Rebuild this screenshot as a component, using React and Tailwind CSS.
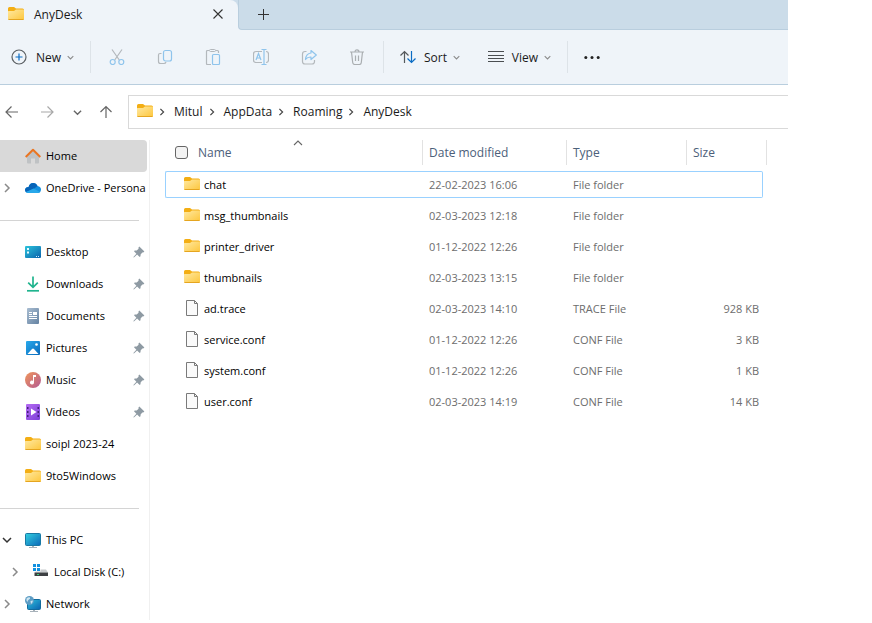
import { useId } from "react";

function Folder() {
  const id = useId();
  return (
    <svg className="block shrink-0" width="16" height="16" viewBox="0 0 16 16" aria-hidden="true">
      <defs>
        <linearGradient id={id} x1="0" y1="0" x2="1" y2="1">
          <stop offset="0" stopColor="#ffe9a2" />
          <stop offset="1" stopColor="#fdc63c" />
        </linearGradient>
      </defs>
      <path d="M0 2.500Q0 1 1.500 1H6l2 1.500h6.500Q16 2.500 16 4V8H0Z" fill="#f3ae14" />
      <path d="M0 5.500Q0 5 .5 5H6L8 3.500h7q1 0 1 1v8.500q0 1-1 1H1q-1 0-1-1Z" fill={`url(#${id})`} />
      <path d="M.5 13.500h15" stroke="#e5a520" />
    </svg>
  );
}

function FileIcon() {
  return (
    <svg className="block shrink-0" width="16" height="16" viewBox="0 0 16 16" aria-hidden="true">
      <path d="M2.500.5h8l3 3v12h-11Z" fill="#fafafa" stroke="#7a7a7a" />
      <path d="M10.500.5v3h3" fill="none" stroke="#7a7a7a" />
    </svg>
  );
}

const chevronPaths = {
  right: "M3 1l4 4-4 4",
  down: "M1 3l4 4 4-4",
  up: "M1 7l4-4 4 4",
};

function Chevron({ dir = "right", size = 10, color = "#8a8a8a", weight = 1.5 }) {
  return (
    <svg className="block shrink-0" width={size} height={size} viewBox="0 0 10 10" fill="none" stroke={color} strokeWidth={weight} aria-hidden="true">
      <path d={chevronPaths[dir]} />
    </svg>
  );
}

function Pin() {
  return (
    <svg className="block shrink-0" width="12" height="12" viewBox="0 0 12 12" fill="#8e9aa3" aria-hidden="true">
      <path d="M6.300.6 11.400 5.600 10.200 6.500 9.300 6.400 7.600 8.400 7.500 10.300 6.700 11 4.100 8.500 1.200 11.300.4 11.500.6 10.700 3.400 7.800 1 5.300 1.700 4.500 3.700 4.500 5.600 2.800 5.400 1.700Z" />
    </svg>
  );
}

function Icon16({ children, ...rest }) {
  return (
    <svg className="block shrink-0" width="16" height="16" viewBox="0 0 16 16" fill="none" aria-hidden="true" {...rest}>
      {children}
    </svg>
  );
}

const GREY = "#b3b8bc";
const BLUE = "#8fc4ec";

const toolIcons = {
  Cut: (
    <>
      <path d="M3 .5 10.300 11M13 .5 5.700 11" stroke={GREY} strokeWidth="1.200" />
      <circle cx="3.700" cy="13" r="2.500" fill="#eff4f9" stroke={BLUE} strokeWidth="1.200" />
      <circle cx="12.300" cy="13" r="2.500" fill="#eff4f9" stroke={BLUE} strokeWidth="1.200" />
    </>
  ),
  Copy: (
    <>
      <path d="M4.500 4.500H3Q1.500 4.500 1.500 6v6.500q0 2 2 2H7q1.500 0 2-1.500" stroke={GREY} strokeWidth="1.200" />
      <rect x="6.500" y="1.500" width="8" height="10.500" rx="2" stroke={BLUE} strokeWidth="1.200" />
    </>
  ),
  Paste: (
    <>
      <path d="M6 15.500H2.500q-1 0-1-1v-12q0-1 1-1H4m7 0h1.500q1 0 1 1V4" stroke={GREY} strokeWidth="1.200" />
      <rect x="4.500" y=".5" width="6" height="2" rx="1" stroke={GREY} />
      <rect x="7.500" y="5.500" width="7" height="10" rx="1" stroke={BLUE} strokeWidth="1.200" />
    </>
  ),
  Rename: (
    <>
      <path d="M9 13.500H3q-2.500 0-2.500-2.500V5Q.5 2.500 3 2.500h6M13 2.500q2.500 0 2.500 2.500v6q0 2.500-2.500 2.500" stroke={GREY} strokeWidth="1.200" />
      <path d="M3 11 5.500 4.500 8 11M4 9h3M8.500.5h5M11 .5v15M8.500 15.500h5" stroke={BLUE} strokeWidth="1.200" />
    </>
  ),
  Share: (
    <>
      <path d="M5.500 2.500H4Q1.500 2.500 1.500 5v7.500q0 2.500 2.500 2.500h7q2.500 0 2.500-2.500V11" stroke={GREY} strokeWidth="1.200" />
      <path d="M10 1.500 15.300 6 10 10.500V8Q6.500 7.800 4.500 10.500 5 4.500 10 4Z" stroke={BLUE} strokeWidth="1.200" strokeLinejoin="round" />
    </>
  ),
  Delete: (
    <path d="M1 3h14M6 3Q6 .8 8 .8T10 3M2.500 3l1.200 10.500q.2 2 2 2h4.600q1.800 0 2-2L13.500 3M6.500 6.500V12M9.500 6.500V12" stroke="#aaaeb1" strokeWidth="1.200" />
  ),
};

function HomeIcon() {
  return (
    <Icon16>
      <path d="M2 7 8 2l6 5v7.500q0 1-1 1h-3V10.500H6v5H3q-1 0-1-1Z" fill="#bfc2c4" />
      <path d="M.7 9 8 1.800 15.300 9" stroke="#ea7521" strokeWidth="2" strokeLinejoin="round" />
    </Icon16>
  );
}

function OneDriveIcon() {
  return (
    <Icon16>
      <path d="M3.600 7Q4.600 3 8.200 3q3 0 4.300 3Q16 6.600 16 9.500 15.800 13 12.500 13h-9Q0 12.900 0 9.900 0 7.500 3.600 7Z" fill="#1490df" />
      <path d="M3.600 7Q4.600 3 8.200 3q3 0 4.300 3L8 9.500 1 12Q-.4 10.500.2 8.900.9 7.200 3.600 7Z" fill="#0864b8" />
      <path d="M1 12 8.500 8.500l6.500 3.400Q14 13 12.500 13h-9Q2 13 1 12Z" fill="#28a8ea" />
    </Icon16>
  );
}

function Shade({ id, from, to }) {
  return (
    <defs>
      <linearGradient id={id} x1="0" y1="0" x2="1" y2="1">
        <stop offset="0" stopColor={from} />
        <stop offset="1" stopColor={to} />
      </linearGradient>
    </defs>
  );
}

function DesktopIcon() {
  return (
    <Icon16>
      <Shade id="desk" from="#2cc4dc" to="#0a62ac" />
      <rect y="2" width="16" height="12" rx="1" fill="url(#desk)" />
      <path d="M2 4h2v2H2ZM2 7.500h2v2H2Z" fill="#e5fbff" />
      <path d="M11 12.500h1m1 0h1" stroke="#cfeaff" />
    </Icon16>
  );
}

function DownloadsIcon() {
  return (
    <Icon16 strokeWidth="1.700">
      <path d="M8 0.500V11M3.200 6.700 8 11.300l4.800-4.600" stroke="#20b48e" />
      <path d="M2 14.800h12" stroke="#20b48e" />
    </Icon16>
  );
}

function DocumentsIcon() {
  return (
    <Icon16>
      <Shade id="docs" from="#a9bdd1" to="#6482a2" />
      <rect x="2" width="12" height="16" rx="1" fill="url(#docs)" />
      <path d="M4 4.500h3M4 6.500h3M4 8.500h8M4 10.500h8" stroke="#fff" />
      <path d="M8 4h4v3H8Z" fill="#fff" />
    </Icon16>
  );
}

function PicturesIcon() {
  return (
    <Icon16>
      <Shade id="pics" from="#28a9ec" to="#0969bb" />
      <rect x="1" y="1" width="14" height="14" rx="1" fill="url(#pics)" />
      <path d="M2.500 14 7 9q1-1 2 0l4.500 5Z" fill="#fff" />
      <circle cx="11.500" cy="4.500" r="1.300" fill="#fff" />
    </Icon16>
  );
}

function MusicIcon() {
  return (
    <Icon16>
      <Shade id="music" from="#f0965a" to="#b45a94" />
      <circle cx="8" cy="8" r="8" fill="url(#music)" />
      <path d="M8 3h3v2H9v5.500A2 2 0 1 1 8 8.800Z" fill="#fff" />
    </Icon16>
  );
}

function VideosIcon() {
  return (
    <Icon16>
      <Shade id="video" from="#b56cf2" to="#7d3ed8" />
      <rect x="1" width="14" height="16" rx="1" fill="url(#video)" />
      <path d="M6 4.500 11.500 8 6 11.500Z" fill="#fff" />
      <path d="M2 3h1.500v2H2ZM2 7h1.500v2H2ZM2 11h1.500v2H2ZM12.500 3H14v2h-1.500ZM12.500 7H14v2h-1.500ZM12.500 11H14v2h-1.500Z" fill="#43207a" />
    </Icon16>
  );
}

function PcIcon() {
  return (
    <Icon16>
      <Shade id="pc" from="#32d0e0" to="#0c68b8" />
      <path d="M7 13h2v2h3v1H4v-1h3Z" fill="#a8b2ba" />
      <rect x=".5" y="1.500" width="15" height="12" rx="1" fill="url(#pc)" stroke="#1878a4" />
    </Icon16>
  );
}

function DiskIcon() {
  return (
    <Icon16>
      <path d="M0 0h3v3H0ZM4 0h3v3H4ZM0 4h3v3H0ZM4 4h3v3H4Z" fill="#1090e0" />
      <path d="M1.500 8.500 3 7.500h4.500V5.500H13l2 3Z" fill="#c8cbce" />
      <path d="M1.500 8.500H15v3.500H1.500Z" fill="#3d4043" />
      <path d="M4 10.500h2" stroke="#3ad07a" />
    </Icon16>
  );
}

function NetworkIcon() {
  return (
    <Icon16>
      <Shade id="net" from="#30c2dc" to="#0a62b0" />
      <path d="M8 13h2v2h3v1H5v-1h3Z" fill="#a8b2ba" />
      <rect x="2.500" y="3.500" width="13" height="10" rx="1" fill="url(#net)" stroke="#126a9c" />
      <circle cx="4.500" cy="4.500" r="4.500" fill="#5c9cc4" />
      <path d="M1.500 2.500Q3.500.8 5 1.500q.5 1.500-1 2T2.500 6Q1 4.500 1.500 2.500ZM5.500 5 8 4.500Q7.500 7 6 8Z" fill="#cfe6f2" />
    </Icon16>
  );
}

function Tool({ name }) {
  return (
    <button type="button" disabled aria-label={name} className="flex h-8 w-8 items-center justify-center">
      <Icon16>{toolIcons[name]}</Icon16>
    </button>
  );
}

function Divider() {
  return <div className="h-8 w-px shrink-0 bg-[#dde3e8]" />;
}

function TabStrip() {
  return (
    <div className="flex h-[30px]">
      <div className="w-[238px] shrink-0 bg-[#cbdcea]">
        <div className="flex h-full items-center rounded-tr-lg bg-[#eff4f9] pr-[10px] pl-2">
          <div className="pb-0.5"><Folder /></div>
          <span className="ml-[10px] flex-1">AnyDesk</span>
          <button type="button" aria-label="Close tab" className="flex h-5 w-5 items-center justify-center pb-0.5">
            <svg width="10" height="10" viewBox="0 0 10 10" stroke="#333" strokeWidth="1.100"><path d="M.5.5l9 9m0-9l-9 9" /></svg>
          </button>
        </div>
      </div>
      <div className="flex-1 bg-[#eff4f9]">
        <div className="flex h-full items-center rounded-bl border-b border-l border-[#b9cede] bg-[#cbdce9] pl-4">
          <button type="button" aria-label="New tab" className="flex h-5 w-[17px] items-center justify-center">
            <svg width="11" height="11" viewBox="0 0 11 11" stroke="#333"><path d="M5.500 0v11M0 5.500h11" /></svg>
          </button>
        </div>
      </div>
    </div>
  );
}

function Toolbar() {
  return (
    <div className="flex h-[55px] items-center border-b border-[#b9cede] bg-[#eff4f9]">
      <div className="flex w-[90px] shrink-0 pl-[11px]">
        <button type="button" className="flex items-center">
          <Icon16>
            <circle cx="8" cy="8" r="7" stroke="#5a5f63" strokeWidth="1.200" />
            <path d="M8 4.500v7M4.500 8h7" stroke="#0a6cc4" strokeWidth="1.200" />
          </Icon16>
          <span className="mr-1.5 ml-[9px] pt-0.5">New</span>
          <Chevron dir="down" size={7} />
        </button>
      </div>
      <Divider />
      <div className="flex gap-4 px-[10px]">
        {Object.keys(toolIcons).map((name) => <Tool key={name} name={name} />)}
      </div>
      <Divider />
      <div className="flex w-[183px] shrink-0 justify-between pr-4 pl-4">
        <button type="button" className="flex items-center">
          <Icon16 strokeWidth="1.200">
            <path d="M4.500 14V2.500M.5 6.500l4-4 4 4" stroke="#55595c" />
            <path d="M11.500 2v11.500M7.500 9.500l4 4 4-4" stroke="#0a6cc4" />
          </Icon16>
          <span className="mr-1.5 ml-2 pt-0.5">Sort</span>
          <Chevron dir="down" size={7} />
        </button>
        <button type="button" className="flex items-center">
          <Icon16 stroke="#4a4e51">
            <path d="M0 2.500h16M0 6.500h16M0 9.500h16M0 12.500h16" />
          </Icon16>
          <span className="mr-1.5 ml-2 pt-0.5">View</span>
          <Chevron dir="down" size={7} />
        </button>
      </div>
      <Divider />
      <button type="button" aria-label="See more" className="ml-4">
        <Icon16 fill="#222"><circle cx="1.800" cy="8.500" r="1.500" /><circle cx="8" cy="8.500" r="1.500" /><circle cx="14.200" cy="8.500" r="1.500" /></Icon16>
      </button>
    </div>
  );
}

function AddressBar() {
  const crumbs = ["Mitul", "AppData", "Roaming", "AnyDesk"];
  return (
    <div className="flex items-center pt-[10px] pb-[11px]">
      <div className="flex w-32 shrink-0 items-center pl-1">
        <button type="button" aria-label="Back">
          <Icon16 stroke="#666" strokeWidth="1.200"><path d="M14 8H2M7.500 2.500 2 8l5.500 5.500" /></Icon16>
        </button>
        <button type="button" aria-label="Forward" className="ml-[19px]">
          <Icon16 stroke="#a8a8a8" strokeWidth="1.200"><path d="M2 8h12M8.500 2.500 14 8l-5.500 5.500" /></Icon16>
        </button>
        <button type="button" aria-label="Recent locations" className="ml-[18px]">
          <Chevron dir="down" size={9} color="#666" />
        </button>
        <button type="button" aria-label="Up" className="ml-4">
          <Icon16 stroke="#666" strokeWidth="1.200"><path d="M8 14V2.500M2.500 8 8 2.500 13.500 8" /></Icon16>
        </button>
      </div>
      <nav aria-label="Path" className="flex h-[34px] flex-1 items-center border-y border-l border-[#d9d9d9] pl-2">
        <div className="pb-0.5"><Folder /></div>
        {crumbs.map((c) => (
          <div key={c} className="flex items-center">
            <span className="mr-2 ml-[5px]"><Chevron size={8} color="#444" /></span>
            <a href="#">{c}</a>
          </div>
        ))}
      </nav>
    </div>
  );
}

function NavItem({ icon, label, expand, pinned, active, nested }) {
  return (
    <a
      href="#"
      className={`flex h-8 items-center whitespace-nowrap ${active ? "rounded-r-sm bg-[#d9d9d9]" : ""} ${nested ? "pl-[10px]" : "pl-[2px]"}`}
    >
      <span className="w-[23px] shrink-0">
        {expand && <Chevron dir={expand} color={expand === "down" ? "#333" : "#8a8a8a"} />}
      </span>
      {icon}
      <span className="ml-[5px] flex-1">{label}</span>
      {pinned && <span className="pr-0.5"><Pin /></span>}
    </a>
  );
}

function Rule() {
  return (
    <div className="flex h-8 items-center pr-2">
      <hr className="w-full border-[#d4d4d4]" />
    </div>
  );
}

function Sidebar() {
  return (
    <nav aria-label="Folders" className="w-[150px] shrink-0 border-r border-[#f0f0f0] pr-0.5 text-[11px] text-black">
      <NavItem active icon={<HomeIcon />} label="Home" />
      <NavItem expand="right" icon={<OneDriveIcon />} label="OneDrive - Persona" />
      <Rule />
      <NavItem pinned icon={<DesktopIcon />} label="Desktop" />
      <NavItem pinned icon={<DownloadsIcon />} label="Downloads" />
      <NavItem pinned icon={<DocumentsIcon />} label="Documents" />
      <NavItem pinned icon={<PicturesIcon />} label="Pictures" />
      <NavItem pinned icon={<MusicIcon />} label="Music" />
      <NavItem pinned icon={<VideosIcon />} label="Videos" />
      <NavItem icon={<Folder />} label="soipl 2023-24" />
      <NavItem icon={<Folder />} label="9to5Windows" />
      <Rule />
      <NavItem expand="down" icon={<PcIcon />} label="This PC" />
      <NavItem nested expand="right" icon={<DiskIcon />} label="Local Disk (C:)" />
      <NavItem expand="right" icon={<NetworkIcon />} label="Network" />
    </nav>
  );
}

const files = [
  { name: "chat", date: "22-02-2023 16:06", type: "File folder", focused: true },
  { name: "msg_thumbnails", date: "02-03-2023 12:18", type: "File folder" },
  { name: "printer_driver", date: "01-12-2022 12:26", type: "File folder" },
  { name: "thumbnails", date: "02-03-2023 13:15", type: "File folder" },
  { name: "ad.trace", date: "02-03-2023 14:10", type: "TRACE File", size: "928 KB" },
  { name: "service.conf", date: "01-12-2022 12:26", type: "CONF File", size: "3 KB" },
  { name: "system.conf", date: "01-12-2022 12:26", type: "CONF File", size: "1 KB" },
  { name: "user.conf", date: "02-03-2023 14:19", type: "CONF File", size: "14 KB" },
];

function FileTable() {
  return (
    <table className="ml-[15px] w-[602px] table-fixed self-start text-left">
      <colgroup>
        <col className="w-[258px]" />
        <col className="w-36" />
        <col className="w-[120px]" />
        <col className="w-20" />
      </colgroup>
      <thead className="text-[#4c607a]">
        <tr>
          <th className="p-0 pb-1 font-normal">
            <div className="relative flex h-[25px] items-center border-r border-[#e2e2e2] pl-[10px]">
              <input type="checkbox" aria-label="Select all" className="h-[13px] w-[13px] appearance-none rounded-[3px] border border-[#666] bg-[#f3f3f3]" />
              <span className="ml-[10px]">Name</span>
              <span className="absolute top-[-2px] left-32"><Chevron dir="up" color="#666" weight={1.1} /></span>
            </div>
          </th>
          {["Date modified", "Type", "Size"].map((h) => (
            <th key={h} className="p-0 pb-1 font-normal">
              <div className="flex h-[25px] items-center border-r border-[#e2e2e2] pl-1.5">{h}</div>
            </th>
          ))}
        </tr>
      </thead>
      <tbody className="text-[11px] text-[#6d6d6d]">
        {files.map((f) => {
          const edge = f.focused ? "border-[#99d1ff]" : "border-transparent";
          return (
            <tr key={f.name}>
              <td className="px-0 py-0.5">
                <div className={`flex h-[27px] items-center rounded-l-xs border-y border-l pl-[18px] text-black ${edge}`}>
                  <div className="pb-0.5">{f.size ? <FileIcon /> : <Folder />}</div>
                  <span className="ml-1">{f.name}</span>
                </div>
              </td>
              <td className="px-0 py-0.5"><div className={`flex h-[27px] items-center border-y pl-1.5 ${edge}`}>{f.date}</div></td>
              <td className="px-0 py-0.5"><div className={`flex h-[27px] items-center border-y pl-1.5 ${edge}`}>{f.type}</div></td>
              <td className="py-0.5 pr-1 pl-0"><div className={`flex h-[27px] items-center justify-end rounded-r-xs border-y border-r pr-[3px] ${edge}`}>{f.size}</div></td>
            </tr>
          );
        })}
      </tbody>
    </table>
  );
}

export default function App() {
  return (
    <div className="min-h-screen bg-white pr-[84px] font-['Open_Sans','Noto_Sans',sans-serif] text-[12px] leading-4 text-[#1a1a1a]">
      <TabStrip />
      <Toolbar />
      <AddressBar />
      <main className="flex">
        <Sidebar />
        <FileTable />
      </main>
    </div>
  );
}
